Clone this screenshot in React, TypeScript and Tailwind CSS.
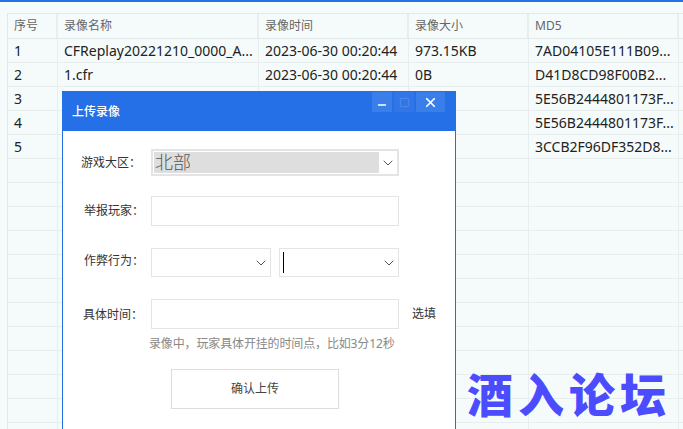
import { ChevronDown, Minus, Square, X } from "lucide-react";

const font = "font-['Noto_Sans','Noto_Sans_CJK_SC',sans-serif]";

const columns = [
  { label: "序号", width: "w-[50px]" },
  { label: "录像名称", width: "w-[201px]" },
  { label: "录像时间", width: "w-[150px]" },
  { label: "录像大小", width: "w-[120px]" },
  { label: "MD5", width: "w-[150px]" },
];

const rows = [
  ["1", "CFReplay20221210_0000_A...", "2023-06-30 00:20:44", "973.15KB", "7AD04105E111B09..."],
  ["2", "1.cfr", "2023-06-30 00:20:44", "0B", "D41D8CD98F00B2..."],
  ["3", "", "", "0B", "5E56B2444801173F..."],
  ["4", "", "", "0B", "5E56B2444801173F..."],
  ["5", "", "", "12KB", "3CCB2F96DF352D8..."],
  ...Array.from({ length: 12 }, () => ["", "", "", "", ""]),
];

function Table() {
  return (
    <div className="ml-[7px] mt-[11px] w-[690px] border-t border-l border-[#e3e8e8]">
      <div className="flex h-[25px] border-b border-[#e3e8e8]">
        {columns.map((col) => (
          <div
            key={col.label}
            className={`${col.width} shrink-0 border-r-2 border-[#e8eded] pl-[6px] text-[12px] leading-[24px] text-[#666]`}
          >
            {col.label}
          </div>
        ))}
      </div>
      {rows.map((row, i) => (
        <div key={i} className="flex h-[24px] border-b border-[#e8eded]">
          {row.map((cell, j) => (
            <div
              key={j}
              className={`${columns[j].width} shrink-0 overflow-hidden whitespace-nowrap border-r border-[#e8eded] pl-[6px] text-[14px] leading-[23px] text-[#222]`}
            >
              {cell}
            </div>
          ))}
        </div>
      ))}
    </div>
  );
}

function FieldLabel({ text, className }: { text: string; className: string }) {
  return <div className={`${className} w-[88px] shrink-0 text-[12px] text-[#333]`}>{text}</div>;
}

function Select({ width, caret }: { width: string; caret?: boolean }) {
  return (
    <div className={`${width} flex h-[29px] items-center justify-between border border-[#e4e4e4] pl-[3px] pr-[1px]`}>
      {caret ? <span className="h-[21px] w-px bg-black" /> : <span />}
      <ChevronDown size={16} strokeWidth={1.5} className="text-[#555]" />
    </div>
  );
}

function Modal() {
  return (
    <div className="absolute left-[62px] top-[89px] h-[340px] w-[394px] border-x border-[#2570e6] bg-white">
      <div className="-mx-px flex h-[40px] items-start justify-between bg-[#2570e6] pl-[10px] pr-[11px]">
        <span className="mt-[12px] text-[12px] font-medium leading-[17px] text-white">上传录像</span>
        <div className="mt-[1px] flex gap-[2px]">
          <div className="flex h-[20px] w-[20px] items-center justify-center bg-[#3a7ee9]">
            <Minus size={12} strokeWidth={2.6} className="mt-[5px] text-white" />
          </div>
          <div className="flex h-[20px] w-[20px] items-center justify-center bg-[#3076e7]">
            <Square size={11} strokeWidth={1} className="text-[#6ea2f0]" />
          </div>
          <div className="flex h-[20px] w-[29px] items-center justify-center bg-[#3a7ee9]">
            <X size={15} strokeWidth={2.8} className="text-white" />
          </div>
        </div>
      </div>

      <div className="mt-[18px] flex items-center">
        <FieldLabel text="游戏大区：" className="pl-[18px]" />
        <div className="flex h-[27px] w-[248px] items-center border-2 border-[#e4e4e4] pl-[1px] pr-[1px]">
          <div className="h-[21px] w-[225px] bg-[#dedede] pl-[1px] text-[18px] font-light leading-[21px] text-[#555]">北部</div>
          <ChevronDown size={16} strokeWidth={1.5} className="ml-auto text-[#555]" />
        </div>
      </div>

      <div className="mt-[20px] flex items-center">
        <FieldLabel text="举报玩家：" className="pl-[21px]" />
        <div className="h-[30px] w-[248px] border border-[#e4e4e4]" />
      </div>

      <div className="mt-[22px] flex items-center">
        <FieldLabel text="作弊行为：" className="mb-[4px] pl-[21px]" />
        <div className="flex gap-[8px]">
          <Select width="w-[120px]" />
          <Select width="w-[120px]" caret />
        </div>
      </div>

      <div className="mt-[22px] flex items-center">
        <FieldLabel text="具体时间：" className="mt-[2px] pl-[20px]" />
        <div className="h-[30px] w-[248px] border border-[#e4e4e4]" />
        <span className="ml-[13px] text-[12px] text-[#333]">选填</span>
      </div>

      <p className="ml-[86px] mt-[6px] text-[12px] leading-[17px] tracking-[-0.14px] text-[#888]">
        录像中，玩家具体开挂的时间点，比如3分12秒
      </p>

      <button className="ml-[108px] mt-[17px] block h-[40px] w-[168px] border border-[#ddd] bg-white text-[12px] text-[#444]">
        确认上传
      </button>
    </div>
  );
}

export default function App() {
  return (
    <div className={`${font} relative h-[429px] w-[683px] overflow-hidden border-t-2 border-[#2570e6] bg-[#f5fbfb]`}>
      <Table />
      <Modal />
      <div className="absolute left-[467px] top-[362px] text-[46px] font-black leading-[60px] tracking-[5px] text-[#4c4cff]">
        酒入论坛
      </div>
    </div>
  );
}
